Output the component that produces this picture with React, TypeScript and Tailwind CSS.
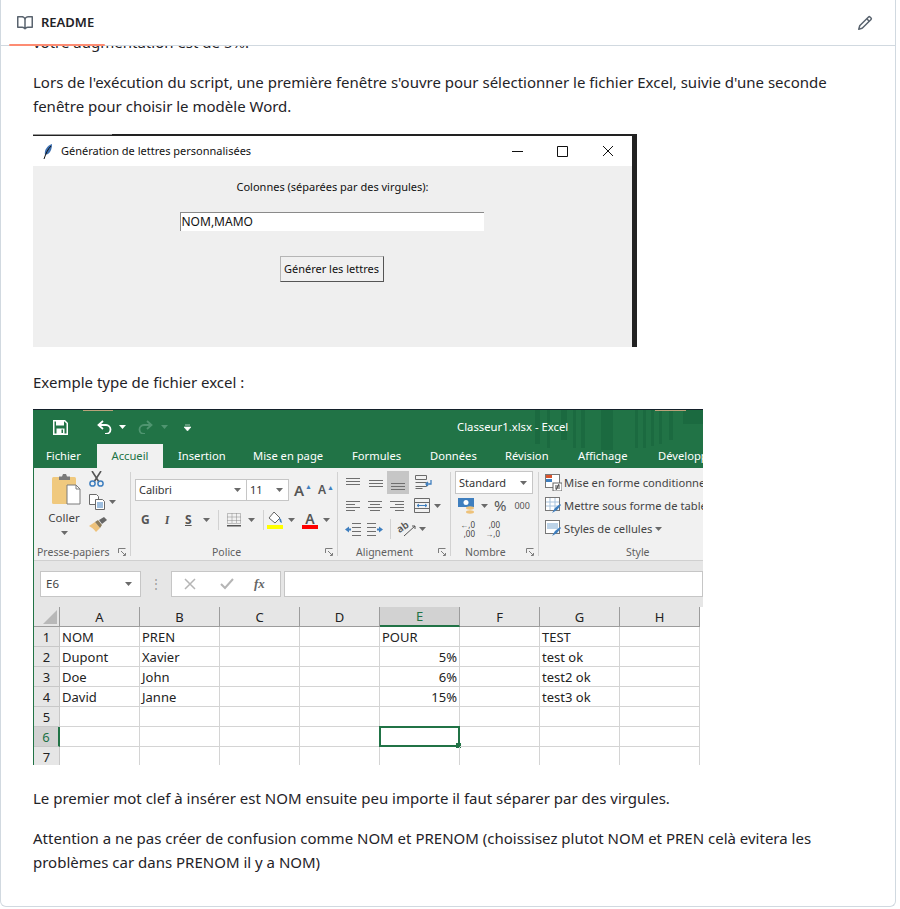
import type { ReactNode } from "react";

const uiFont = "font-['Noto_Sans',sans-serif]";

const Caret = ({ className = "" }: { className?: string }) => (
    <svg width="7" height="4" viewBox="0 0 7 4" className={`shrink-0 ${className}`}>
        <path d="M0 0h7L3.5 4z" fill="#6a6a6a" />
    </svg>
);

const Launcher = () => (
    <svg width="8" height="8" viewBox="0 0 8 8" className="shrink-0">
        <path d="M.5 5V.5H7.5M5 7.5h2.5V5M3 3l4 4" fill="none" stroke="#7d7d7d" />
    </svg>
);

// small stack of lines, used by every alignment button
const Lines = ({ rows }: { rows: number[][] }) => (
    <svg width="16" height="14" viewBox="0 0 16 14" className="shrink-0">
        {rows.map(([a, b, y]) => (
            <rect key={y} x={a} y={y} width={b - a} height="1" fill="#6f6f6f" />
        ))}
    </svg>
);

const Sep = () => <div className="my-1 w-px shrink-0 bg-[#d2d2d2]" />;

const Group = ({ width, label, pl, children }: { width: string; label: string; pl: string; children: ReactNode }) => (
    <div className={`flex h-full shrink-0 flex-col ${width}`}>
        <div className="h-[77px] pt-[3px]">{children}</div>
        <div className={`flex h-[14px] items-center justify-between pr-1 text-[10.5px] leading-none text-[#5f5f5f] ${pl}`}>
            <span>{label}</span>
            <Launcher />
        </div>
    </div>
);

const Combo = ({ text, width }: { text: string; width: string }) => (
    <div className={`flex h-[22px] items-center justify-between border border-[#c6c6c6] bg-white pl-[3px] pr-[5px] text-[11px] text-[#333] ${width}`}>
        <span>{text}</span>
        <Caret />
    </div>
);

const PasteIcon = () => (
    <svg width="30" height="32" viewBox="0 0 30 32">
        <rect x="0" y="3" width="24" height="27" rx="1.5" fill="#f0c97e" />
        <path d="M7 4V2.5h3L11 0h3l1 2.5h3V6H7z" fill="#7a7a7a" />
        <path d="M15 11h9l4 4v15H15z" fill="#fff" stroke="#7a7a7a" />
        <path d="M24 11v4h4" fill="none" stroke="#7a7a7a" />
    </svg>
);

const ScissorsIcon = () => (
    <svg width="16" height="16" viewBox="0 0 16 16">
        <path d="M3 0l7 11M12 0L5 11" stroke="#555" strokeWidth="1.6" />
        <circle cx="3.5" cy="12.5" r="2.6" fill="none" stroke="#3f7fbf" strokeWidth="1.5" />
        <circle cx="11.5" cy="12.5" r="2.6" fill="none" stroke="#3f7fbf" strokeWidth="1.5" />
    </svg>
);

const CopyIcon = () => (
    <svg width="16" height="16" viewBox="0 0 16 16" fill="#fff" stroke="#6a6a6a">
        <path d="M.5.5h7l2 2v8h-9z" />
        <path d="M6.5 5.5h7l2 2v8h-9z" />
        <path d="M8 9h6M8 11h6M8 13h6" stroke="#3f7fbf" />
    </svg>
);

const BrushIcon = () => (
    <svg width="18" height="15" viewBox="0 0 18 15">
        <path d="M0 9l6-4 5 6-4 4C5 12 2 10 0 9z" fill="#eec27a" />
        <path d="M6 5l3-2 4 5-2 3z" fill="#8a7a5a" />
        <path d="M10 3l5-3 3 3-5 4z" fill="#666" />
    </svg>
);

const FontA = ({ size, arrow }: { size: string; arrow: string }) => (
    <span className={`flex items-start font-semibold leading-none text-[#555] ${size}`}>
        A<span className={`ml-px text-[7px] leading-none ${arrow}`}>▲</span>
    </span>
);

const BordersIcon = () => (
    <svg width="14" height="14" viewBox="0 0 14 14">
        <path d="M.5.5h13v10H.5zM5 .5v10M9.500 .5v10M.5 4h13M.5 7.500h13" fill="none" stroke="#8a8a8a" strokeDasharray="1 1" />
        <rect x="0" y="12" width="14" height="1.500" fill="#555" />
    </svg>
);

const FillIcon = () => (
    <svg width="16" height="19" viewBox="0 0 16 19">
        <path d="M7 1l6 6-5 5-6-5z" fill="#fff" stroke="#666" />
        <path d="M12 7l2 1 1 4-2-1z" fill="#3f7fbf" />
        <rect x="0" y="14" width="16" height="4" fill="#ffff00" />
    </svg>
);

const WrapIcon = () => (
    <svg width="18" height="16" viewBox="0 0 18 16" fill="none">
        <path d="M.5.500h11v4H.5zM.5 7.500h11v4H.5M.5 13.500h7" stroke="#6a6a6a" />
        <path d="M16 5v4h-5M13 7l-2 2 2 2" stroke="#3f7fbf" strokeWidth="1.300" />
    </svg>
);

const MergeIcon = () => (
    <svg width="16" height="15" viewBox="0 0 16 15" fill="none">
        <path d="M.5.500h15v14H.5zM.5 4.500h15M.5 10.500h15" stroke="#6a6a6a" />
        <path d="M3 7.500h10" stroke="#3f7fbf" />
        <path d="M5 6l-2 1.500L5 9M11 6l2 1.500L11 9" stroke="#3f7fbf" />
    </svg>
);

const OrientIcon = () => (
    <svg width="20" height="17" viewBox="0 0 20 17" fill="none">
        <path d="M7 16L18 6M15 6h3v3" stroke="#555" />
        <text x="0" y="11" transform="rotate(-35 5 8)" fontSize="10" fontWeight="600" fill="#555" stroke="none">ab</text>
    </svg>
);

const IndentIcon = ({ flip }: { flip?: boolean }) => (
    <svg width="16" height="14" viewBox="0 0 16 14" className={flip ? "-scale-x-100" : ""}>
        <path d="M7 1.500h9M7 5.500h9M7 9.500h9M7 13.500h9" stroke="#6f6f6f" />
        <path d="M0 7.500l4-3v2h2v2H4v2z" fill="#3f7fbf" />
    </svg>
);

const CurrencyIcon = () => (
    <svg width="18" height="18" viewBox="0 0 18 18">
        <rect x="0" y="1" width="16" height="9" fill="#3f7fbf" />
        <circle cx="8" cy="5.500" r="2.500" fill="#fff" />
        <ellipse cx="12" cy="11" rx="4" ry="1.700" fill="#eec27a" />
        <ellipse cx="12" cy="15" rx="4" ry="1.700" fill="#eec27a" />
    </svg>
);

const TableStyleIcon = ({ kind }: { kind: "cond" | "table" | "cell" }) => (
    <svg width="17" height="17" viewBox="0 0 17 17" className="shrink-0">
        <rect x=".5" y=".5" width="14" height="13" fill="#fff" stroke="#777" />
        {kind === "cond" && (
            <g>
                <rect x="1" y="1" width="6" height="3" fill="#d9532c" />
                <rect x="1" y="5" width="6" height="3" fill="#3f7fbf" />
                <rect x="8" y="9" width="9" height="8" fill="#fff" stroke="#666" />
                <path d="M10 12h5M10 14h5M14 10l-3 6" stroke="#444" />
            </g>
        )}
        {kind === "table" && <path d="M1 5h13M1 9h13M5 1v12M10 1v12" stroke="#a9c4de" />}
        {kind === "cell" && <rect x="2" y="3" width="11" height="6" fill="#bcd3e8" />}
        {kind !== "cond" && <path d="M7 16l3-5 5-4 1 1-4 5z" fill="#3f7fbf" />}
    </svg>
);

const Ribbon = () => (
    <div className={`flex h-[93px] overflow-hidden border-b border-[#d0d0d0] bg-[#f1f1f1] ${uiFont}`}>
        <Group width="w-[96px]" label="Presse-papiers" pl="pl-[3px]">
            <div className="flex">
                <div className="ml-[11px] flex w-[38px] flex-col items-center pt-[3px]">
                    <div className="ml-[5px] h-[36px]">
                        <PasteIcon />
                    </div>
                    <span className="text-[11.5px] leading-[16px] text-[#444]">Coller</span>
                    <Caret className="mt-[5px]" />
                </div>
                <div className="ml-[6px] flex flex-col gap-[7px]">
                    <ScissorsIcon />
                    <div className="flex items-center gap-[4px]">
                        <CopyIcon />
                        <Caret />
                    </div>
                    <BrushIcon />
                </div>
            </div>
        </Group>
        <Sep />
        <Group width="w-[206px]" label="Police" pl="pl-[81px]">
            <div className="flex items-center pl-[4px] pt-[8px]">
                <Combo text="Calibri" width="w-[112px]" />
                <Combo text="11" width="w-[43px] -ml-px" />
                <FontA size="text-[15px] ml-[5px]" arrow="text-[#3f7fbf]" />
                <FontA size="text-[12px] ml-[6px]" arrow="text-[#3f7fbf]" />
            </div>
            <div className="mt-[9px] flex h-[20px] items-center pl-[10px] text-[12px] text-[#555]">
                <b className="w-[24px]">G</b>
                <i className="w-[20px] font-serif font-bold">I</i>
                <span className="w-[13px] font-bold underline">S</span>
                <Caret className="ml-[5px]" />
                <div className="ml-[8px] h-[20px] w-px bg-[#d2d2d2]" />
                <div className="ml-[8px]">
                    <BordersIcon />
                </div>
                <Caret className="ml-[7px]" />
                <div className="ml-[8px] h-[20px] w-px bg-[#d2d2d2]" />
                <div className="ml-[3px]">
                    <FillIcon />
                </div>
                <Caret className="ml-[5px]" />
                <div className="ml-[7px] flex w-[16px] flex-col items-center">
                    <span className="text-[14px] font-semibold leading-[13px]">A</span>
                    <div className="h-[4px] w-full bg-[#ff0000]" />
                </div>
                <Caret className="ml-[5px]" />
            </div>
        </Group>
        <Sep />
        <Group width="w-[112px]" label="Alignement" pl="pl-[18px]">
            <div className="flex h-[23px] items-center pl-[7px]">
                <div className="w-[23px]">
                    <Lines rows={[[1, 15, 2], [1, 15, 5], [1, 15, 8]]} />
                </div>
                <div className="w-[19px]">
                    <Lines rows={[[1, 15, 4], [1, 15, 7], [1, 15, 10]]} />
                </div>
                <div className="flex h-[23px] w-[22px] items-center justify-center bg-[#c6c6c6]">
                    <Lines rows={[[1, 15, 7], [1, 15, 10], [1, 15, 13]]} />
                </div>
                <div className="ml-[6px]">
                    <WrapIcon />
                </div>
            </div>
            <div className="flex h-[23px] items-center pl-[7px]">
                <div className="w-[22px]">
                    <Lines rows={[[1, 15, 2], [1, 10, 5], [1, 15, 8], [1, 10, 11]]} />
                </div>
                <div className="w-[22px]">
                    <Lines rows={[[1, 15, 2], [3, 13, 5], [1, 15, 8], [3, 13, 11]]} />
                </div>
                <div className="w-[21px]">
                    <Lines rows={[[1, 15, 2], [6, 15, 5], [1, 15, 8], [6, 15, 11]]} />
                </div>
                <div className="ml-[4px]">
                    <MergeIcon />
                </div>
                <Caret className="ml-[4px]" />
            </div>
            <div className="flex h-[23px] items-center pl-[7px]">
                <div className="w-[22px]">
                    <IndentIcon />
                </div>
                <IndentIcon flip />
                <div className="ml-[7px] h-[20px] w-px bg-[#d2d2d2]" />
                <div className="ml-[6px]">
                    <OrientIcon />
                </div>
                <Caret className="ml-[2px]" />
            </div>
        </Group>
        <Sep />
        <Group width="w-[87px]" label="Nombre" pl="pl-[14px]">
            <div className="h-[23px] pl-[4px]">
                <Combo text="Standard" width="w-[78px] h-[23px]" />
            </div>
            <div className="flex h-[23px] items-center pl-[7px] text-[#555]">
                <CurrencyIcon />
                <Caret className="ml-[5px]" />
                <span className="ml-[6px] text-[15px] leading-none">%</span>
                <span className="ml-[8px] text-[9px]">000</span>
            </div>
            <div className="flex h-[23px] items-center gap-[8px] pl-[7px] text-[8px] text-[#444]">
                <div className="flex w-[17px] flex-col items-end">
                    <span className="h-[9px] leading-[9px]">←,0</span>
                    <span className="h-[9px] leading-[9px]">,00</span>
                </div>
                <div className="flex w-[17px] flex-col items-end">
                    <span className="h-[9px] leading-[9px]">,00</span>
                    <span className="h-[9px] leading-[9px]">→,0</span>
                </div>
            </div>
        </Group>
        <Sep />
        <div className="flex w-[165px] shrink-0 flex-col">
            <div className="h-[77px] whitespace-nowrap pl-[6px] pt-[3px] text-[11.2px] text-[#444]">
                <div className="flex h-[23px] items-center gap-[2px]">
                    <TableStyleIcon kind="cond" />
                    Mise en forme conditionnelle
                </div>
                <div className="flex h-[23px] items-center gap-[2px]">
                    <TableStyleIcon kind="table" />
                    Mettre sous forme de tableau
                </div>
                <div className="flex h-[23px] items-center gap-[2px]">
                    <TableStyleIcon kind="cell" />
                    Styles de cellules
                    <Caret className="ml-[1px]" />
                </div>
            </div>
            <div className="flex h-[14px] items-center pl-[87px] text-[10.5px] leading-none text-[#5f5f5f]">Style</div>
        </div>
    </div>
);

const tabs = [
    { label: "Fichier", w: "w-[51px]" },
    { label: "Accueil", w: "w-[66px] bg-[#f1f1f1] text-[#217346] text-center" },
    { label: "Insertion", w: "w-[90px] pl-[15px]" },
    { label: "Mise en page", w: "w-[99px]" },
    { label: "Formules", w: "w-[78px]" },
    { label: "Données", w: "w-[75px]" },
    { label: "Révision", w: "w-[73px]" },
    { label: "Affichage", w: "w-[80px]" },
    { label: "Développeur", w: "w-[80px]" },
];

const columns = ["A", "B", "C", "D", "E", "F", "G", "H"];

const rows = [
    ["NOM", "PREN", "", "", "POUR", "", "TEST", ""],
    ["Dupont", "Xavier", "", "", "5%", "", "test ok", ""],
    ["Doe", "John", "", "", "6%", "", "test2 ok", ""],
    ["David", "Janne", "", "", "15%", "", "test3 ok", ""],
    ["", "", "", "", "", "", "", ""],
    ["", "", "", "", "", "", "", ""],
    ["", "", "", "", "", "", "", ""],
];

const ExcelShot = () => (
    <div className={`h-[356px] w-[670px] overflow-hidden ${uiFont}`}>
        <div className="relative h-[59px] overflow-hidden border-t border-[#14202a] bg-[#217346] text-white">
            {/* darker stripes behind the window title, and scraps of the window behind */}
            <svg width="670" height="59" viewBox="0 0 670 59" className="absolute left-0 top-0">
                <path d="M502 0h5v34h-5zM514 0h3v38h-3zM528 0h6v30h-6zM540 0h3v38h-3zM548 0h4v38h-4zM568 0h12v40h-12zM602 0h3v38h-3zM610 0h3v38h-3zM618 0h3v36h-3zM626 0h3v34h-3zM636 0h4v30h-4zM650 0h20v14h-20z" fill="#1b6a40" />
                <path d="M50 0h30v1H50zM622 0h31v1h-31z" fill="#b9a27a" />
            </svg>
            <div className="relative flex h-[34px] items-center">
                <svg width="15" height="15" viewBox="0 0 15 15" className="ml-[20px]">
                    <path d="M.75.75h11l2.500 2.500v11H.75z" fill="none" stroke="#fff" strokeWidth="1.500" />
                    <rect x="3" y="1" width="8" height="4.500" fill="#fff" />
                    <rect x="3.500" y="8.500" width="8" height="5.500" fill="#fff" />
                    <rect x="8.500" y="9.500" width="1.500" height="3.500" fill="#217346" />
                </svg>
                <svg width="16" height="14" viewBox="0 0 16 14" fill="none" stroke="#fff" strokeWidth="1.800" className="ml-[29px]">
                    <path d="M6 1L1.500 5 6 9M2 5h7a4.500 4.500 0 0 1 0 9H8" />
                </svg>
                <svg width="7" height="4" viewBox="0 0 7 4" className="ml-[6px]">
                    <path d="M0 0h7L3.500 4z" fill="#fff" />
                </svg>
                <svg width="16" height="14" viewBox="0 0 16 14" fill="none" stroke="#4f9570" strokeWidth="1.800" className="ml-[11px]">
                    <path d="M10 1l4.500 4L10 9M14 5H7a4.500 4.500 0 0 0 0 9h1" />
                </svg>
                <svg width="7" height="4" viewBox="0 0 7 4" className="ml-[8px]">
                    <path d="M0 0h7L3.500 4z" fill="#4f9570" />
                </svg>
                <svg width="7" height="7" viewBox="0 0 7 7" className="ml-[16px]">
                    <path d="M1 1h5M0 3h7L3.500 7z" fill="#fff" stroke="#fff" strokeWidth=".6" />
                </svg>
                <span className="ml-[266px] whitespace-nowrap text-[11.3px]">Classeur1.xlsx - Excel</span>
            </div>
            <div className="relative flex h-[24px] items-center whitespace-nowrap pl-[13px] text-[11.2px]">
                {tabs.map((tab) => (
                    <span key={tab.label} className={`h-[24px] shrink-0 leading-[24px] ${tab.w}`}>
                        {tab.label}
                    </span>
                ))}
            </div>
        </div>
        <div className="border-l border-[#217346]">
            <Ribbon />
            <div className="flex h-[46px] items-start bg-[#e6e6e6] pl-[6px] pt-[10px] text-[11.5px] text-[#444]">
                <div className="flex h-[26px] w-[101px] items-center justify-between border border-[#c6c6c6] bg-white pl-[5px] pr-[8px]">
                    E6
                    <Caret />
                </div>
                <div className="flex h-[26px] w-[30px] items-center justify-center text-[#999]">⋮</div>
                <div className="flex h-[26px] w-[110px] items-center border border-[#c6c6c6] bg-white pl-[12px]">
                    <svg width="12" height="12" viewBox="0 0 12 12" stroke="#b5b5b5" strokeWidth="1.500">
                        <path d="M1 1l10 10M11 1L1 11" />
                    </svg>
                    <svg width="14" height="12" viewBox="0 0 14 12" fill="none" stroke="#b5b5b5" strokeWidth="2" className="ml-[24px]">
                        <path d="M1 6l4 4 8-9" />
                    </svg>
                    <span className="ml-[20px] font-['Liberation_Serif',serif] text-[13px] font-bold italic text-[#666]">fx</span>
                </div>
                <div className="ml-[3px] h-[26px] grow border border-[#c6c6c6] bg-white" />
            </div>
            <div className="grid grid-cols-[26px_repeat(8,80px)_3px] bg-white text-[13px] text-[#222]">
                <div className="flex h-[20px] items-end justify-end border-b border-r border-[#9c9c9c] bg-[#e6e6e6] pb-[2px] pr-[2px]">
                    <svg width="14" height="14" viewBox="0 0 14 14">
                        <path d="M14 0v14H0z" fill="#b8b8b8" />
                    </svg>
                </div>
                {columns.map((col) => (
                    <div
                        key={col}
                        className={`flex h-[20px] items-center justify-center border-r border-[#9c9c9c] ${
                            col === "E"
                                ? "border-b-2 border-b-[#217346] bg-[#d2d2d2] text-[#217346]"
                                : "border-b border-b-[#9c9c9c] bg-[#e6e6e6]"
                        }`}
                    >
                        {col}
                    </div>
                ))}
                <div className="h-[20px]" />
                {rows.map((row, r) => (
                    <div key={r} className="contents">
                        <div
                            className={`flex h-[20px] items-center justify-center border-b border-r border-[#c8c8c8] ${
                                r === 5 ? "border-r-2 border-r-[#217346] bg-[#d2d2d2] text-[#217346]" : "bg-[#e6e6e6]"
                            }`}
                        >
                            {r + 1}
                        </div>
                        {row.map((cell, c) => (
                            <div
                                key={c}
                                className={`relative h-[20px] whitespace-nowrap border-b border-r border-[#d4d4d4] px-[2px] leading-[20px] ${
                                    /%$/.test(cell) ? "text-right" : ""
                                }`}
                            >
                                {cell}
                                {r === 5 && c === 4 && (
                                    <div className="absolute -inset-x-px -top-px bottom-[-1px] border-2 border-[#217346]">
                                        <div className="absolute -bottom-[3px] -right-[3px] h-[5px] w-[5px] bg-[#217346]" />
                                    </div>
                                )}
                            </div>
                        ))}
                        <div className="h-[20px]" />
                    </div>
                ))}
            </div>
        </div>
    </div>
);

const DialogShot = () => (
    <div className={`relative flex h-[213px] w-[604px] flex-col border-r-[5px] border-t-2 border-[#222] bg-[#efefef] ${uiFont}`}>
        <div className="absolute -top-[2px] left-0 h-px w-[79px] bg-[#9a9a9a]" />
        <div className="flex h-[30px] shrink-0 items-center bg-white pl-[10px] text-[11px] text-[#111]">
            <svg width="10" height="15" viewBox="0 0 10 15">
                <path d="M9 0C4 2 1 6 2 11l3-1c3-2 4-6 4-10z" fill="#3c6fb0" />
                <path d="M8 2C5 5 3 9 1 15" fill="none" stroke="#111" />
            </svg>
            <span className="ml-[8px]">Génération de lettres personnalisées</span>
            <svg width="102" height="12" viewBox="0 0 102 12" fill="none" stroke="#111" className="ml-auto mr-[18px]">
                <path d="M0 6.500h11M45.500 1.500h10v10h-10zM91 1l10 10M101 1L91 11" />
            </svg>
        </div>
        <div className="flex grow flex-col items-center text-[11px] text-[#111]">
            <span className="mt-[13px] leading-[16px]">Colonnes (séparées par des virgules):</span>
            <div className="mr-[2px] mt-[17px] h-[19px] w-[304px] border-l border-t border-[#8a8a8a] bg-white pl-[1px] text-[12px] leading-[18px]">NOM,MAMO</div>
            <div className="mr-[2px] mt-[25px] flex h-[26px] w-[104px] items-center justify-center border border-[#b5b5b5] border-b-[#555] border-r-[#555] bg-[#f0f0f0]">Générer les lettres</div>
        </div>
    </div>
);

const App = () => {
    return (
        <div className="h-[907px] w-[896px] overflow-hidden rounded-b-md border-x border-b border-[#d1d9e0] bg-white font-['Noto_Sans',sans-serif] text-[#1f2328]">
            <div className="relative z-10 flex h-[46px] items-center justify-between border-b border-[#d1d9e0] bg-white pl-[16px] pr-[22px]">
                <div className="flex items-center gap-2 text-[13px] font-semibold">
                    <svg width="16" height="16" viewBox="0 0 16 16" fill="#59636e">
                        <path d="M0 1.750A.75.75 0 0 1 .75 1h4.253c1.227 0 2.317.59 3 1.501A3.743 3.743 0 0 1 11.006 1h4.245a.75.75 0 0 1 .75.75v10.500a.75.75 0 0 1-.75.75h-4.507a2.250 2.250 0 0 0-1.591.659l-.622.621a.75.75 0 0 1-1.060 0l-.622-.621A2.250 2.250 0 0 0 5.258 13H.75a.75.75 0 0 1-.75-.75Zm7.251 10.324.004-5.073-.002-2.253A2.250 2.250 0 0 0 5.003 2.500H1.500v9h3.757a3.750 3.750 0 0 1 1.994.574ZM8.755 4.750l-.004 7.322a3.752 3.752 0 0 1 1.992-.572H14.500v-9h-3.495a2.250 2.250 0 0 0-2.250 2.250Z" />
                    </svg>
                    README
                </div>
                <svg width="16" height="16" viewBox="0 0 16 16" fill="#59636e">
                    <path d="M11.013 1.427a1.750 1.750 0 0 1 2.474 0l1.086 1.086a1.750 1.750 0 0 1 0 2.474l-8.610 8.610c-.21.21-.47.364-.756.445l-3.251.93a.75.75 0 0 1-.927-.928l.929-3.250c.081-.286.235-.547.445-.758l8.610-8.610Zm.176 4.823L9.750 4.810l-6.286 6.287a.253.253 0 0 0-.064.108l-.558 1.953 1.953-.558a.253.253 0 0 0 .108-.064Zm1.238-3.763a.25.25 0 0 0-.354 0L10.811 3.750l1.439 1.440 1.263-1.263a.25.25 0 0 0 0-.354Z" />
                </svg>
                <div className="absolute -bottom-px left-[8px] h-[2px] w-[96px] rounded-full bg-[#fd8c73]" />
            </div>
            <div className="-mt-[16px] pl-[32px] pr-[32px] text-[15px] leading-[24px]">
                <p className="mb-[16px]">votre augmentation est de 5%.</p>
                <p className="mb-[16px]">
                    Lors de l'exécution du script, une première fenêtre s'ouvre pour sélectionner le fichier Excel, suivie d'une seconde fenêtre pour choisir le modèle Word.
                </p>
                <DialogShot />
                <p className="mb-[15px] mt-[23px]">Exemple type de fichier excel :</p>
                <ExcelShot />
                <p className="mb-[16px] mt-[21px]">Le premier mot clef à insérer est NOM ensuite peu importe il faut séparer par des virgules.</p>
                <p>
                    Attention a ne pas créer de confusion comme NOM et PRENOM (choissisez plutot NOM et PREN celà evitera les problèmes car dans PRENOM il y a NOM)
                </p>
            </div>
        </div>
    );
};

export default App;
